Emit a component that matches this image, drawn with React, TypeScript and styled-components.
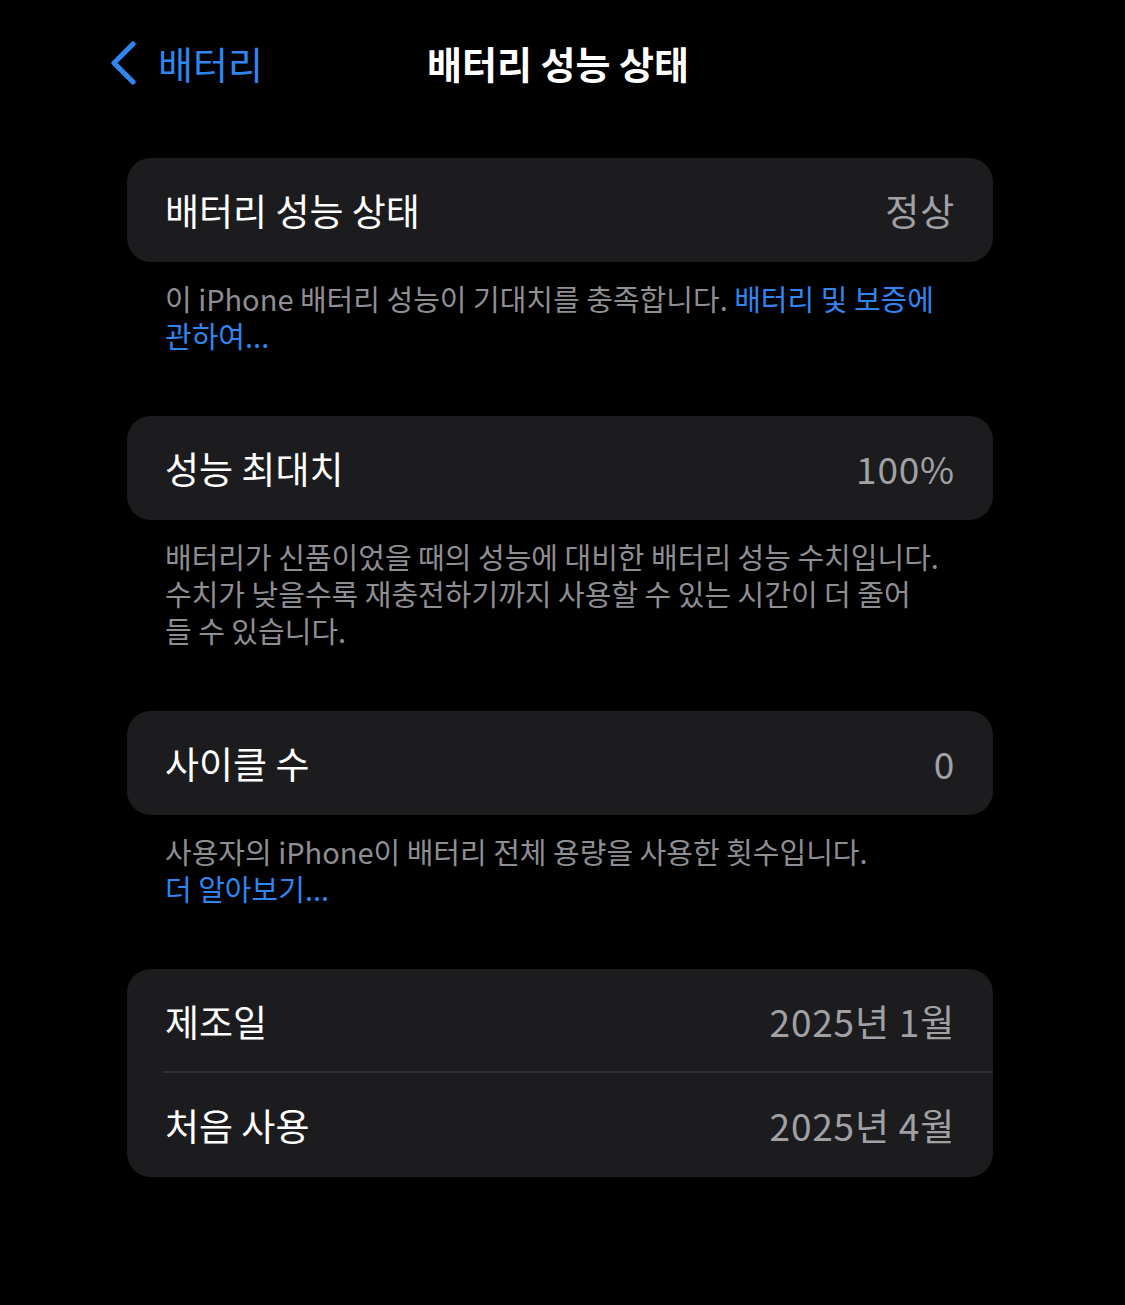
import React from "react";
import styled, { createGlobalStyle } from "styled-components";

const Global = createGlobalStyle`
  html, body { margin: 0; padding: 0; background: #000; }
  body {
    font-family: "Noto Sans CJK KR", "Noto Sans", "Liberation Sans", sans-serif;
    -webkit-font-smoothing: antialiased;
  }
`;

const Page = styled.div`
  width: 1125px;
  min-height: 1305px;
  background: #000;
  box-sizing: border-box;
`;

const NavBar = styled.header`
  display: grid;
  grid-template-columns: 1fr auto 1fr;
  align-items: center;
  height: 126px;
  padding: 0 117px 0 108px;
  box-sizing: border-box;
`;

const BackButton = styled.div`
  display: flex;
  align-items: center;
  gap: 20px;
  color: #2f86f0;
  font-size: 38px;
  line-height: 1;
  justify-self: start;
`;

const Title = styled.h1`
  margin: 0;
  color: #fff;
  font-size: 38px;
  font-weight: 600;
  line-height: 1;
`;

const Content = styled.main`
  display: flex;
  flex-direction: column;
  padding: 32px 132px 0 127px;
`;

const Section = styled.section`
  display: flex;
  flex-direction: column;
  margin-bottom: 62px;
`;

const Card = styled.div`
  background: #1c1c1e;
  border-radius: 24px;
  overflow: hidden;
`;

const Row = styled.div<{ $divider?: boolean }>`
  display: flex;
  align-items: center;
  justify-content: space-between;
  height: 104px;
  padding: 0 38px;
  position: relative;
  ${(p) =>
    p.$divider
      ? `
    &::after {
      content: "";
      position: absolute;
      left: 36px;
      right: 0;
      bottom: 0;
      height: 2px;
      background: #333336;
    }
  `
      : ""}
`;

const Label = styled.span`
  color: #fff;
  font-size: 37px;
  line-height: 1;
`;

const Value = styled.span`
  color: #a0a0a5;
  font-size: 37px;
  letter-spacing: 0.8px;
  line-height: 1;
`;

const Footer = styled.p`
  margin: 18px 0 0;
  padding: 0 0 0 38px;
  color: #8e8e93;
  font-size: 29px;
  line-height: 37px;
  white-space: nowrap;
`;

const Link = styled.span`
  color: #2f86f0;
`;

const Chevron = () => (
  <svg width="30" height="44" viewBox="0 0 30 44" aria-hidden>
    <polyline
      points="25,3 6,22 25,41"
      fill="none"
      stroke="#2f86f0"
      strokeWidth="5.2"
      strokeLinecap="round"
      strokeLinejoin="round"
    />
  </svg>
);

export default function App() {
  return (
    <Page>
      <Global />
      <NavBar>
        <BackButton>
          <Chevron />
          <span>배터리</span>
        </BackButton>
        <Title>배터리 성능 상태</Title>
        <div />
      </NavBar>
      <Content>
        <Section>
          <Card>
            <Row>
              <Label>배터리 성능 상태</Label>
              <Value>정상</Value>
            </Row>
          </Card>
          <Footer>
            이 iPhone 배터리 성능이 기대치를 충족합니다. <Link>배터리 및 보증에</Link>
            <br />
            <Link>관하여...</Link>
          </Footer>
        </Section>
        <Section>
          <Card>
            <Row>
              <Label>성능 최대치</Label>
              <Value>100%</Value>
            </Row>
          </Card>
          <Footer>
            배터리가 신품이었을 때의 성능에 대비한 배터리 성능 수치입니다.
            <br />
            수치가 낮을수록 재충전하기까지 사용할 수 있는 시간이 더 줄어
            <br />
            들 수 있습니다.
          </Footer>
        </Section>
        <Section>
          <Card>
            <Row>
              <Label>사이클 수</Label>
              <Value>0</Value>
            </Row>
          </Card>
          <Footer>
            사용자의 iPhone이 배터리 전체 용량을 사용한 횟수입니다.
            <br />
            <Link>더 알아보기...</Link>
          </Footer>
        </Section>
        <Section>
          <Card>
            <Row $divider>
              <Label>제조일</Label>
              <Value>2025년 1월</Value>
            </Row>
            <Row>
              <Label>처음 사용</Label>
              <Value>2025년 4월</Value>
            </Row>
          </Card>
        </Section>
      </Content>
    </Page>
  );
}
